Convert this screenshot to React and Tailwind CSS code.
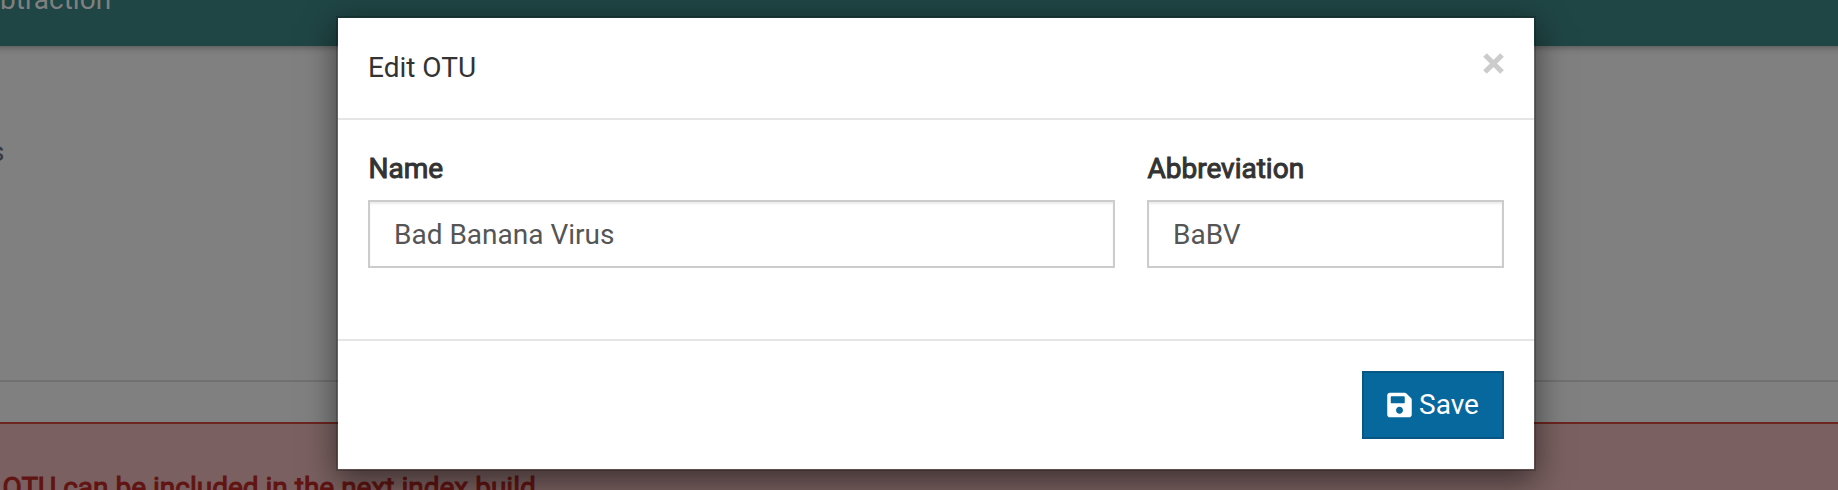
import { FaSave } from "react-icons/fa";

function Field({ label, value, className }) {
  return (
    <label className={`flex flex-col ${className}`}>
      <span className="-mt-px mb-[11px] h-10 pl-[0.5px] leading-10 text-[#333333] [-webkit-text-stroke:1px_#333333]">
        {label}
      </span>
      <input
        type="text"
        defaultValue={value}
        className="h-[68px] w-full border-2 border-[#cccccc] bg-white px-6 text-[28px] text-[#555555] shadow-[inset_0_2px_2px_rgba(0,0,0,0.075)] outline-none"
      />
    </label>
  );
}

function Backdrop() {
  return (
    <div className="flex h-full flex-col bg-[#808080]">
      <header className="-mx-3 h-[46px] shrink-0 overflow-hidden bg-[#1f4544] px-3 shadow-[0_2px_6px_rgba(0,0,0,0.3)]">
        <div className="-mt-5 h-10 leading-10 whitespace-nowrap text-[#808080]">btraction</div>
      </header>
      <div className="h-[334px] shrink-0 pt-[86px]">
        <div className="-ml-[10px] h-10 leading-10 text-[#343a40]">s</div>
      </div>
      <hr className="h-[2px] shrink-0 border-0 bg-[#707070]" />
      <div className="mt-10 flex-1 border-t-2 border-[#6d251f] bg-[#7a6060] pt-11">
        <div className="pl-[2.5px] leading-10 whitespace-nowrap text-[#611412] [-webkit-text-stroke:1px_#611412]">
          OTU can be included in the next index build.
        </div>
      </div>
    </div>
  );
}

export default function App() {
  return (
    <div className="relative h-[490px] w-full overflow-hidden font-[Roboto,sans-serif] text-[28px]">
      <Backdrop />
      <div className="absolute inset-0 pt-4 pl-[336px]">
        <section
          role="dialog"
          className="flex h-[455px] w-[1200px] flex-col border-2 border-black/20 bg-white bg-clip-padding shadow-[0_10px_30px_rgba(0,0,0,0.5)]"
        >
          <header className="flex h-[102px] shrink-0 items-start justify-between border-b-2 border-[#e5e5e5] px-[30px] pt-[30px]">
            <h4 className="leading-10 text-[#333333]">Edit OTU</h4>
            <button type="button" aria-label="Close" className="mt-[5px] text-[#cccccc]">
              <svg width="21" height="21" viewBox="0 0 21 21" fill="none" stroke="currentColor" strokeWidth="5.2">
                <path d="M2 2L19 19M19 2L2 19" />
              </svg>
            </button>
          </header>
          <div className="flex h-[219px] shrink-0 justify-between px-[30px] pt-[30px]">
            <Field label="Name" value="Bad Banana Virus" className="w-[747px]" />
            <Field label="Abbreviation" value="BaBV" className="w-[357px]" />
          </div>
          <footer className="flex flex-1 items-start justify-end border-t-2 border-[#e5e5e5] px-[30px] pt-[30px]">
            <button
              type="button"
              className="flex h-[68px] w-[142px] items-center justify-center gap-[7px] border-2 border-[#075683] bg-[#07689d] text-white"
            >
              <FaSave className="w-[25px]" />
              <span>Save</span>
            </button>
          </footer>
        </section>
      </div>
    </div>
  );
}
